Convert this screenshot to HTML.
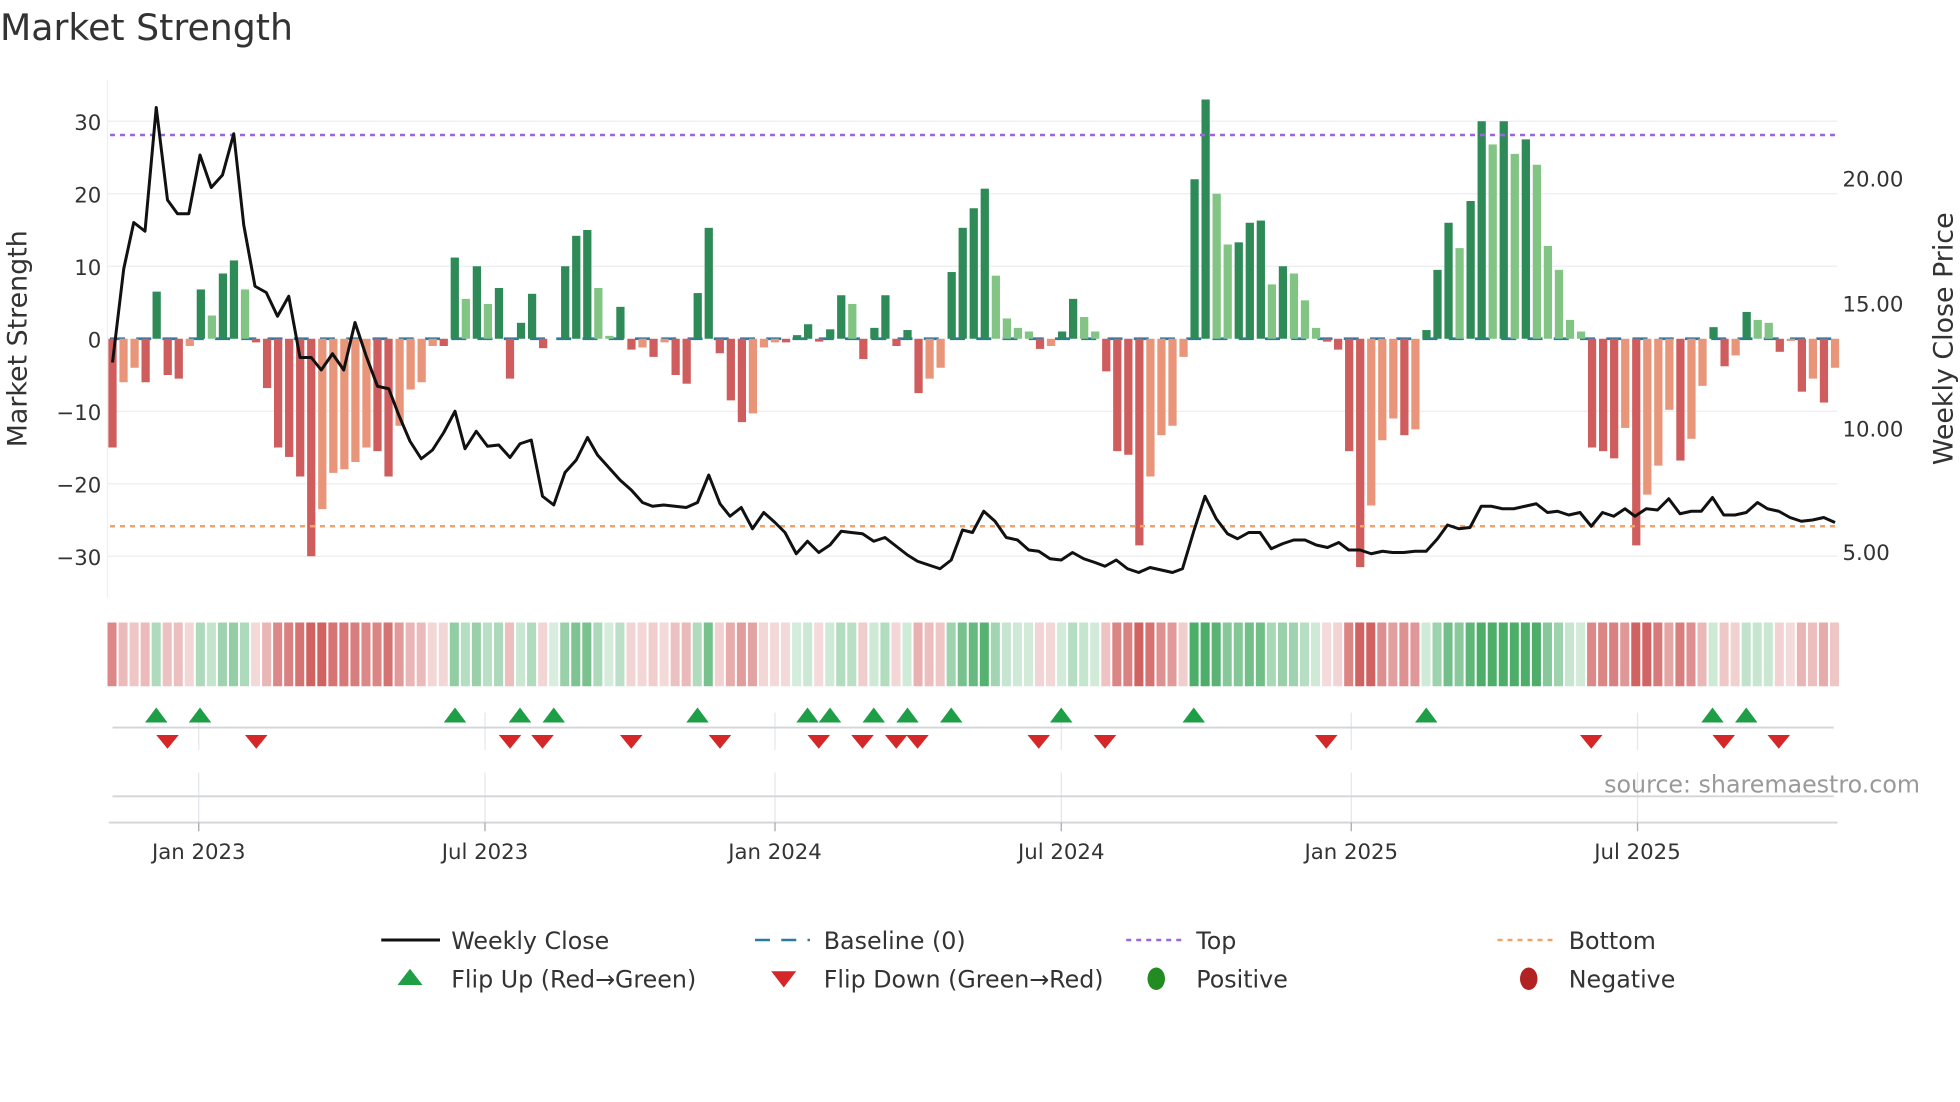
<!DOCTYPE html>
<html><head><meta charset="utf-8"><style>
html,body{margin:0;padding:0;background:#fff;width:1960px;height:1102px;overflow:hidden}
svg{display:block;font-family:"DejaVu Sans","Liberation Sans",sans-serif}
</style></head><body>
<svg id="s" width="1960" height="1102" viewBox="0 0 1568 881.6" xmlns="http://www.w3.org/2000/svg">
<text x="0" y="32" font-size="29" fill="#333">Market Strength</text>
<g id="grid"></g>
<line x1="86" y1="64" x2="86" y2="478" stroke="#eceef2" stroke-width="1"/>
<g font-size="17" fill="#333" text-anchor="end">
<text x="81" y="104">30</text><text x="81" y="162">20</text><text x="81" y="220">10</text><text x="81" y="278">0</text>
<text x="81" y="336">−10</text><text x="81" y="394">−20</text><text x="81" y="452">−30</text>
</g>
<g font-size="17" fill="#333">
<text x="1474" y="149">20.00</text><text x="1474" y="249">15.00</text><text x="1474" y="349">10.00</text><text x="1474" y="448">5.00</text>
</g>
<text transform="translate(21,271) rotate(-90)" font-size="21.5" fill="#333" text-anchor="middle">Market Strength</text>
<text transform="translate(1562,271) rotate(-90)" font-size="21.5" fill="#333" text-anchor="middle">Weekly Close Price</text>
<line x1="88" y1="271" x2="1470" y2="271" stroke="#2a7aa8" stroke-width="2.2" stroke-dasharray="12,9"/>
<g id="bars"></g>
<line x1="88" y1="108" x2="1470" y2="108" stroke="#9a66dd" stroke-width="2" stroke-dasharray="4,4"/>
<line x1="88" y1="421" x2="1470" y2="421" stroke="#f0a468" stroke-width="2" stroke-dasharray="4,4"/>
<polyline id="price" fill="none" stroke="#111" stroke-width="2.4" stroke-linejoin="round"/>
<g id="heat"></g>
<g stroke="#e3e6ec" stroke-width="1">
<line x1="159" y1="570" x2="159" y2="600"/><line x1="388" y1="570" x2="388" y2="600"/><line x1="620" y1="570" x2="620" y2="600"/><line x1="849" y1="570" x2="849" y2="600"/><line x1="1081" y1="570" x2="1081" y2="600"/><line x1="1310" y1="570" x2="1310" y2="600"/>
<line x1="159" y1="618" x2="159" y2="665"/><line x1="388" y1="618" x2="388" y2="665"/><line x1="620" y1="618" x2="620" y2="665"/><line x1="849" y1="618" x2="849" y2="665"/><line x1="1081" y1="618" x2="1081" y2="665"/><line x1="1310" y1="618" x2="1310" y2="665"/>
</g>
<line x1="90" y1="582" x2="1467" y2="582" stroke="#d3d5d9" stroke-width="1.5"/>
<line x1="90" y1="637" x2="1467" y2="637" stroke="#d3d5d9" stroke-width="1.5"/>
<line x1="87" y1="658" x2="1470" y2="658" stroke="#d3d5d9" stroke-width="1.5"/>
<g stroke="#aaa" stroke-width="1"><line x1="159" y1="658" x2="159" y2="665"/><line x1="388" y1="658" x2="388" y2="665"/><line x1="620" y1="658" x2="620" y2="665"/><line x1="849" y1="658" x2="849" y2="665"/><line x1="1081" y1="658" x2="1081" y2="665"/><line x1="1310" y1="658" x2="1310" y2="665"/></g>
<g id="marks"></g>
<text x="1536" y="634" font-size="19" fill="#999" text-anchor="end">source: sharemaestro.com</text>
<g font-size="17" fill="#333" text-anchor="middle">
<text x="159" y="687">Jan 2023</text><text x="388" y="687">Jul 2023</text><text x="620" y="687">Jan 2024</text><text x="849" y="687">Jul 2024</text><text x="1081" y="687">Jan 2025</text><text x="1310" y="687">Jul 2025</text>
</g>
<g font-size="19" fill="#333">
<line x1="305" y1="752" x2="352" y2="752" stroke="#111" stroke-width="2.4"/><text x="361" y="759">Weekly Close</text>
<line x1="604" y1="752" x2="648" y2="752" stroke="#2a7aa8" stroke-width="2" stroke-dasharray="12,9"/><text x="659" y="759">Baseline (0)</text>
<line x1="901" y1="752" x2="945" y2="752" stroke="#9a66dd" stroke-width="2" stroke-dasharray="4,4"/><text x="957" y="759">Top</text>
<line x1="1198" y1="752" x2="1243" y2="752" stroke="#f0a468" stroke-width="2" stroke-dasharray="4,4"/><text x="1255" y="759">Bottom</text>
<polygon points="318,788 338,788 328,775" fill="#1e9e46"/><text x="361" y="790">Flip Up (Red→Green)</text>
<polygon points="617,777 637,777 627,790" fill="#d62728"/><text x="659" y="790">Flip Down (Green→Red)</text>
<ellipse cx="925" cy="783" rx="7" ry="9" fill="#228b22"/><text x="957" y="790">Positive</text>
<ellipse cx="1223" cy="783" rx="7" ry="9" fill="#b22222"/><text x="1255" y="790">Negative</text>
</g>
</svg>
<script>
var NS="http://www.w3.org/2000/svg";
function el(t,a,p){var e=document.createElementNS(NS,t);for(var k in a)e.setAttribute(k,a[k]);document.getElementById(p).appendChild(e);return e;}
[97,155,213,329,387,445].forEach(function(y){el("line",{x1:86,y1:y,x2:1470,y2:y,stroke:"#eceef2","stroke-width":1},"grid");});
var v=[-15,-6,-4,-6,6.5,-5,-5.5,-1,6.8,3.2,9,10.8,6.8,-0.5,-6.8,-15,-16.3,-19,-30,-23.5,-18.5,-18,-17,-15,-15.5,-19,-12,-7,-6,-1,-1,11.2,5.5,10,4.8,7,-5.5,2.2,6.2,-1.3,0,10,14.2,15,7,0.4,4.4,-1.5,-1.2,-2.5,-0.5,-5,-6.2,6.3,15.3,-2,-8.5,-11.5,-10.3,-1.2,-0.5,-0.5,0.5,2,-0.4,1.3,6,4.8,-2.8,1.5,6,-1,1.2,-7.5,-5.5,-4,9.2,15.3,18,20.7,8.7,2.8,1.5,1,-1.4,-1,1,5.5,3,1,-4.5,-15.5,-16,-28.5,-19,-13.3,-12,-2.5,22,33,20,13,13.3,16,16.3,7.5,10,9,5.3,1.5,-0.4,-1.5,-15.5,-31.5,-23,-14,-11,-13.3,-12.5,1.2,9.5,16,12.5,19,30,26.8,30,25.5,27.5,24,12.8,9.5,2.6,1,-15,-15.5,-16.5,-12.3,-28.5,-21.5,-17.5,-9.8,-16.8,-13.8,-6.5,1.6,-3.8,-2.3,3.7,2.6,2.2,-1.8,-0.3,-7.3,-5.5,-8.8,-4];
var n=v.length,x0=90,x1=1468,dx=(x1-x0)/(n-1);
for(var i=0;i<n;i++){var x=x0+i*dx,val=v[i],prev=i?v[i-1]:0;
 var dark=val>=0?val>=prev:val<=prev;
 var c=val>=0?(dark?"#2e8a57":"#82c483"):(dark?"#cf5d5d":"#e8957a");
 var h=Math.abs(val)*5.8,y=val>=0?271-h:271;
 if(h>0.3)el("rect",{x:x-3.3,y:y,width:6.6,height:h,fill:c},"bars");
 var a=Math.min(1,0.22+Math.abs(val)/28);
 var hc=val>=0?"rgba(46,160,80,"+a*0.85+")":"rgba(200,70,70,"+a*0.85+")";
 el("rect",{x:x-4,y:498,width:dx-1.6,height:51,fill:hc},"heat");}
var p=[[90,290],[99,215],[107,178],[116,185],[125,86],[134,160],[142,171],[151,171],[160,124],[169,150],[178,140],[187,107],[195,180],[204,229],[213,234],[222,253],[231,237],[240,286],[249,286],[257,296],[266,283],[275,296],[284,258],[293,285],[302,309],[311,311],[319,332],[328,353],[337,367],[346,360],[355,346],[364,329],[372,359],[381,345],[390,357],[399,356],[408,366],[416,355],[425,352],[434,397],[443,404],[452,378],[461,368],[470,350],[478,364],[487,374],[496,384],[505,392],[514,402],[522,405],[531,404],[540,405],[549,406],[558,402],[567,380],[576,403],[584,413],[593,406],[602,423],[611,410],[620,418],[628,426],[637,443],[646,433],[655,442],[664,436],[673,425],[681,426],[690,427],[699,433],[708,430],[717,437],[726,444],[734,449],[743,452],[752,455],[761,448],[770,424],[778,426],[787,409],[796,417],[805,430],[814,432],[823,440],[831,441],[840,447],[849,448],[858,442],[867,447],[876,450],[884,453],[893,448],[902,455],[911,458],[920,454],[929,456],[938,458],[946,455],[955,425],[964,397],[973,415],[982,427],[990,431],[999,426],[1008,426],[1017,439],[1026,435],[1035,432],[1044,432],[1053,436],[1062,438],[1071,434],[1079,440],[1088,440],[1097,443],[1106,441],[1114,442],[1123,442],[1132,441],[1141,441],[1150,431],[1158,420],[1167,423],[1176,422],[1185,405],[1193,405],[1202,407],[1211,407],[1220,405],[1229,403],[1238,410],[1246,409],[1255,412],[1264,410],[1273,421],[1282,410],[1291,413],[1300,407],[1308,413],[1317,407],[1326,408],[1335,399],[1344,411],[1353,409],[1361,409],[1370,398],[1379,412],[1388,412],[1397,410],[1406,402],[1414,407],[1423,409],[1432,414],[1441,417],[1450,416],[1459,414],[1468,418]];
document.getElementById("price").setAttribute("points",p.map(function(q){return q.join(",")}).join(" "));
[125,160,364,416,443,558,646,664,699,726,761,849,955,1141,1370,1397].forEach(function(x){el("polygon",{points:(x-9)+",578 "+(x+9)+",578 "+x+",566",fill:"#1e9e46"},"marks");});
[134,205,408,434,505,576,655,690,717,734,831,884,1061,1273,1379,1423].forEach(function(x){el("polygon",{points:(x-9)+",588 "+(x+9)+",588 "+x+",599",fill:"#d62728"},"marks");});
</script>
</body></html>
